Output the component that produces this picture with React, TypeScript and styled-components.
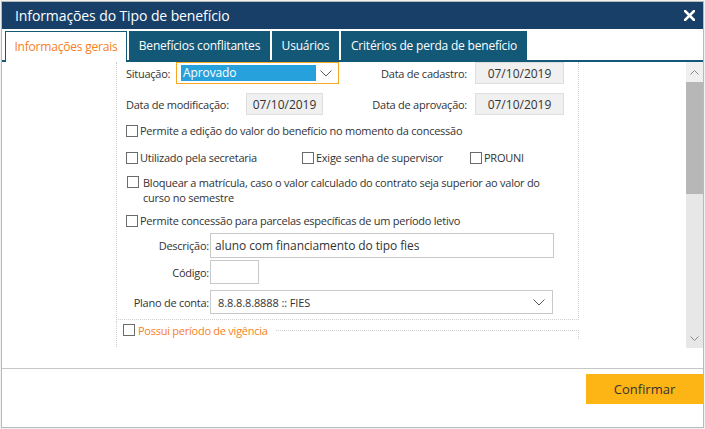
import styled, { createGlobalStyle } from "styled-components";

const GlobalStyle = createGlobalStyle`
  html, body {
    margin: 0;
    padding: 0;
    background: #f2f2f2;
  }
  body {
    font-family: "Open Sans", "Noto Sans", sans-serif;
    color: #333;
  }
  * {
    box-sizing: border-box;
  }
`;

const Window = styled.div`
  margin: 1px 0 0 1px;
  width: 703px;
  height: 427px;
  border: 1px solid #b9b9b9;
  background: #fff;
  display: flex;
  flex-direction: column;
`;

const TitleBar = styled.div`
  height: 27px;
  flex: none;
  background: #173f68;
  color: #fff;
  font-size: 14px;
  letter-spacing: -0.1px;
  display: flex;
  align-items: center;
  justify-content: space-between;
  padding: 0 8px 0 13px;
`;

const TabStrip = styled.div`
  flex: none;
  margin-top: 2px;
  height: 31px;
  display: flex;
  gap: 2px;
  padding-left: 3px;
  border-bottom: 2px solid #145878;
`;

const Tab = styled.div<{ $active?: boolean; $w: number }>`
  width: ${(p) => p.$w}px;
  height: ${(p) => (p.$active ? "31px" : "29px")};
  display: flex;
  align-items: center;
  justify-content: center;
  font-size: 12px;
  letter-spacing: -0.2px;
  white-space: nowrap;
  background: ${(p) => (p.$active ? "#fff" : "#145878")};
  color: ${(p) => (p.$active ? "#f7801e" : "#fff")};
  border: ${(p) => (p.$active ? "1px solid #145878" : "none")};
  border-bottom: none;
  padding-bottom: ${(p) => (p.$active ? "2px" : "0")};
`;

const Body = styled.div`
  flex: none;
  height: 286px;
  display: flex;
`;

const ScrollArea = styled.div`
  flex: 1;
  overflow: hidden;
  padding-left: 114px;
`;

const Scrollbar = styled.div`
  width: 17px;
  flex: none;
  display: flex;
  flex-direction: column;
  background: #e7e7e7;
`;

const ScrollButton = styled.div<{ $light?: boolean }>`
  height: 20px;
  flex: none;
  display: flex;
  align-items: center;
  justify-content: center;
  background: ${(p) => (p.$light ? "#f0f0f0" : "#e7e7e7")};
`;

const Thumb = styled.div`
  height: 112px;
  flex: none;
  background: #b7b7b7;
`;

const Track = styled.div`
  flex: 1;
`;

const Panel = styled.div`
  width: 463px;
  border-left: 1px dotted #cfcfcf;
  border-right: 1px dotted #cfcfcf;
  border-bottom: 1px dotted #cfcfcf;
  padding: 0 14px 5px 9px;
  display: flex;
  flex-direction: column;
  font-size: 11px;
  letter-spacing: -0.25px;
`;

const Row = styled.div<{ $top: number }>`
  margin-top: ${(p) => p.$top}px;
  display: flex;
  align-items: center;
  justify-content: space-between;
`;

const Group = styled.div`
  display: flex;
  align-items: center;
  gap: 8px;
`;

const Label = styled.span<{ $w?: number }>`
  width: ${(p) => (p.$w ? `${p.$w}px` : "auto")};
  color: #333;
  white-space: nowrap;
`;

const LeftGroup = styled.div`
  display: flex;
  align-items: center;
`;

const Select = styled.div`
  width: 163px;
  height: 22px;
  border: 1px solid #f5a623;
  display: flex;
  align-items: center;
  padding: 0 6px 0 4px;
  gap: 4px;
`;

const Highlight = styled.div`
  width: 136px;
  height: 16px;
  background: #27a1db;
  color: #fff;
  font-size: 12px;
  letter-spacing: -0.1px;
  line-height: 16px;
  padding-left: 2px;
`;

const DateBox = styled.div<{ $w: number }>`
  width: ${(p) => p.$w}px;
  height: 22px;
  background: #f0f0f0;
  border: 1px solid #dedede;
  display: flex;
  align-items: center;
  justify-content: center;
  font-size: 12px;
  letter-spacing: 0;
  color: #333;
`;

const CheckRow = styled.div<{ $top: number; $gap?: number; $start?: boolean }>`
  margin-top: ${(p) => p.$top}px;
  display: flex;
  align-items: ${(p) => (p.$start ? "flex-start" : "center")};
  gap: ${(p) => p.$gap ?? 2}px;
  line-height: 15px;
  color: #333;
`;

const CheckGrid = styled.div<{ $top: number }>`
  margin-top: ${(p) => p.$top}px;
  display: grid;
  grid-template-columns: 176px 168px auto;
  align-items: center;
`;

const Check = styled.label`
  display: flex;
  align-items: center;
  gap: 2px;
  line-height: 16px;
  color: #333;
  white-space: nowrap;
`;

const Box = styled.span<{ $shift?: number; $mt?: number }>`
  width: 12px;
  height: 12px;
  flex: none;
  border: 1px solid #6b6b6b;
  background: #fff;
  margin-left: ${(p) => p.$shift ?? 0}px;
  margin-top: ${(p) => p.$mt ?? 0}px;
`;

const WrapText = styled.span`
  width: 405px;
`;

const FieldRow = styled.div<{ $top: number }>`
  margin-top: ${(p) => p.$top}px;
  display: flex;
  align-items: center;
  gap: 1px;
`;

const FieldLabel = styled.span`
  width: 83px;
  text-align: right;
  color: #333;
  white-space: nowrap;
`;

const TextInput = styled.div<{ $w: number; $h: number }>`
  width: ${(p) => p.$w}px;
  height: ${(p) => p.$h}px;
  border: 1px solid #c9c9c9;
  display: flex;
  align-items: center;
  justify-content: space-between;
  padding: 0 7px 0 4px;
  font-size: 12px;
  letter-spacing: -0.1px;
  color: #333;
`;

const SmallValue = styled.span`
  font-size: 11px;
  padding-left: 3px;
`;

const Fieldset = styled.div`
  width: 463px;
  margin-top: 1px;
  border-left: 1px dotted #cfcfcf;
  height: 40px;
`;

const Legend = styled.div`
  display: flex;
  align-items: center;
  height: 18px;
  padding-left: 6px;
  gap: 3px;
  font-size: 11px;
  letter-spacing: -0.25px;
  color: #f7801e;
`;

const LegendLine = styled.div`
  flex: 1;
  align-self: stretch;
  margin-top: 9px;
  margin-left: 5px;
  border-top: 1px dotted #cfcfcf;
  border-right: 1px dotted #cfcfcf;
`;

const Spacer = styled.div`
  height: 20px;
  flex: none;
`;

const Footer = styled.div`
  flex: none;
  border-top: 1px solid #c6c6c6;
  padding-top: 5px;
  display: flex;
  justify-content: flex-end;
`;

const ConfirmButton = styled.button`
  width: 117px;
  height: 30px;
  border: none;
  background: #fdb415;
  color: #333;
  font-family: inherit;
  font-size: 13px;
  cursor: pointer;
`;

const Chevron = ({ size = 12, color = "#555" }: { size?: number; color?: string }) => (
  <svg width={size} height={size / 2 + 1} viewBox="0 0 12 7">
    <polyline points="0.5,0.5 6,6 11.5,0.5" fill="none" stroke={color} strokeWidth="1" />
  </svg>
);

const CloseIcon = () => (
  <svg width="11" height="11" viewBox="0 0 11 11">
    <path d="M1 1 L10 10 M10 1 L1 10" stroke="#fff" strokeWidth="2.6" strokeLinecap="square" />
  </svg>
);

export default function App() {
  return (
    <>
      <GlobalStyle />
      <Window>
        <TitleBar>
          <span>Informações do Tipo de benefício</span>
          <CloseIcon />
        </TitleBar>
        <TabStrip>
          <Tab $active $w={122}>Informações gerais</Tab>
          <Tab $w={141}>Benefícios conflitantes</Tab>
          <Tab $w={67}>Usuários</Tab>
          <Tab $w={186}>Critérios de perda de benefício</Tab>
        </TabStrip>
        <Body>
          <ScrollArea>
            <Panel>
              <Row $top={0}>
                <LeftGroup>
                  <Label $w={50}>Situação:</Label>
                  <Select>
                    <Highlight>Aprovado</Highlight>
                    <Chevron />
                  </Select>
                </LeftGroup>
                <Group>
                  <Label>Data de cadastro:</Label>
                  <DateBox $w={89}>07/10/2019</DateBox>
                </Group>
              </Row>
              <Row $top={9}>
                <LeftGroup>
                  <Label $w={120}>Data de modificação:</Label>
                  <DateBox $w={77}>07/10/2019</DateBox>
                </LeftGroup>
                <Group>
                  <Label>Data de aprovação:</Label>
                  <DateBox $w={89}>07/10/2019</DateBox>
                </Group>
              </Row>
              <CheckRow $top={8}>
                <Box />
                <span>Permite a edição do valor do benefício no momento da concessão</span>
              </CheckRow>
              <CheckGrid $top={12}>
                <Check>
                  <Box />
                  Utilizado pela secretaria
                </Check>
                <Check>
                  <Box />
                  Exige senha de supervisor
                </Check>
                <Check>
                  <Box />
                  PROUNI
                </Check>
              </CheckGrid>
              <CheckRow $top={9} $gap={4} $start>
                <Box $shift={1} $mt={1} />
                <WrapText>
                  Bloquear a matrícula, caso o valor calculado do contrato seja superior ao valor do
                  curso no semestre
                </WrapText>
              </CheckRow>
              <CheckRow $top={8}>
                <Box />
                <span>Permite concessão para parcelas específicas de um período letivo</span>
              </CheckRow>
              <FieldRow $top={5}>
                <FieldLabel>Descrição:</FieldLabel>
                <TextInput $w={344} $h={25}>aluno com financiamento do tipo fies</TextInput>
              </FieldRow>
              <FieldRow $top={2}>
                <FieldLabel>Código:</FieldLabel>
                <TextInput $w={49} $h={24} />
              </FieldRow>
              <FieldRow $top={6}>
                <FieldLabel>Plano de conta:</FieldLabel>
                <TextInput $w={343} $h={24}>
                  <SmallValue>8.8.8.8.8888 :: FIES</SmallValue>
                  <Chevron />
                </TextInput>
              </FieldRow>
            </Panel>
            <Fieldset>
              <Legend>
                <Box />
                <span>Possui período de vigência</span>
                <LegendLine />
              </Legend>
            </Fieldset>
          </ScrollArea>
          <Scrollbar>
            <ScrollButton $light>
              <svg width="9" height="5" viewBox="0 0 9 5">
                <polyline points="0.5,4.5 4.5,0.5 8.5,4.5" fill="none" stroke="#8a8a8a" strokeWidth="1" />
              </svg>
            </ScrollButton>
            <Thumb />
            <Track />
            <ScrollButton>
              <svg width="9" height="5" viewBox="0 0 9 5">
                <polyline points="0.5,0.5 4.5,4.5 8.5,0.5" fill="none" stroke="#8a8a8a" strokeWidth="1" />
              </svg>
            </ScrollButton>
          </Scrollbar>
        </Body>
        <Spacer />
        <Footer>
          <ConfirmButton>Confirmar</ConfirmButton>
        </Footer>
      </Window>
    </>
  );
}
